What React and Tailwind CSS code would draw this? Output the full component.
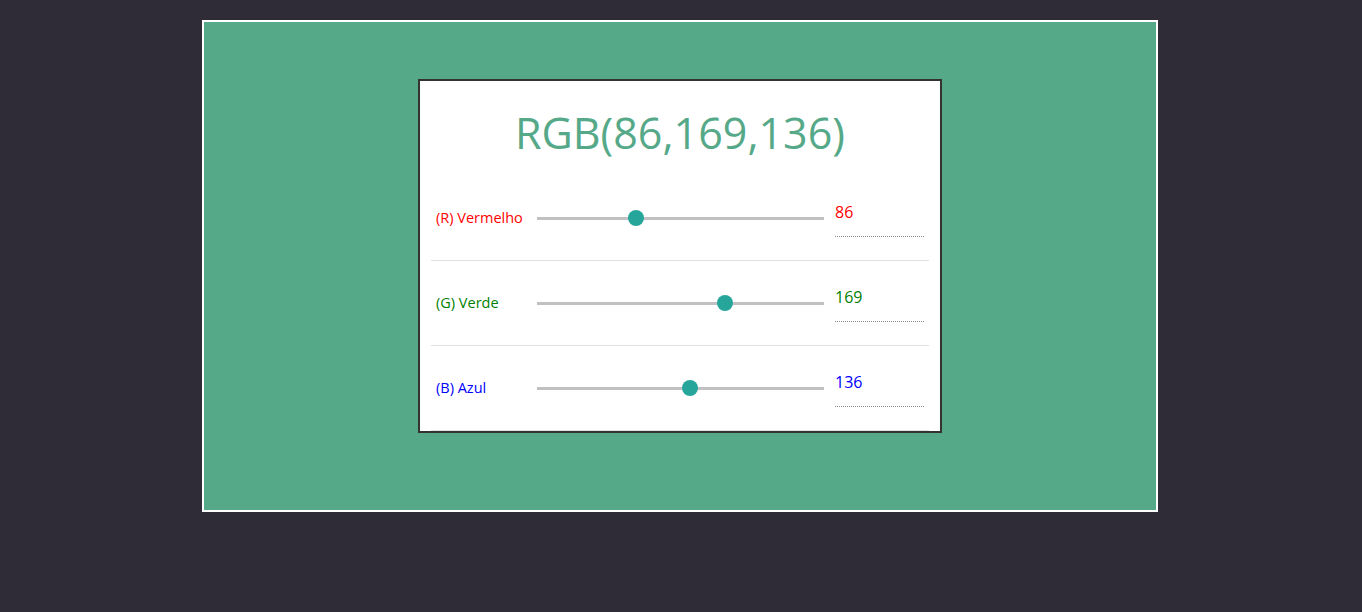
import { useState } from "react";

const CHANNELS = [
  { key: "r", label: "(R) Vermelho", color: "text-[#ff0000]" },
  { key: "g", label: "(G) Verde", color: "text-[#008000]" },
  { key: "b", label: "(B) Azul", color: "text-[#0000ff]" },
];

function Slider({ value }) {
  // thumb sits inside track minus its own width
  const pct = value / 255;
  return (
    <div className="relative h-4 flex-1 flex items-center">
      <div className="h-[3px] w-full bg-[#c2c0c2]" />
      <div
        className="absolute top-0 h-4 w-4 rounded-full bg-[#26a69a]"
        style={{ left: `calc((100% - 16px) * ${pct})` }}
      />
    </div>
  );
}

export default function App() {
  const [rgb] = useState({ r: 86, g: 169, b: 136 });
  const bg = `rgb(${rgb.r},${rgb.g},${rgb.b})`;

  return (
    <div className="min-h-screen bg-[#2f2c37] pt-5 font-['Open_Sans',sans-serif]">
      <div
        className="ml-[202px] flex h-[492px] w-[956px] justify-center border-2 border-white pt-[57px]"
        style={{ backgroundColor: bg }}
      >
        <div className="h-[354px] w-[524px] border-2 border-[#333333] bg-white px-[11px]">
          <h1
            className="flex h-[95px] items-center justify-center pt-2 text-[43px] leading-none"
            style={{ color: bg }}
          >
            RGB({rgb.r},{rgb.g},{rgb.b})
          </h1>
          {CHANNELS.map((c) => (
            <div
              key={c.key}
              className="flex h-[85px] items-center border-b border-[#e0e0e0] px-[5px]"
            >
              <span className={`w-[101px] text-[14.5px] ${c.color}`}>{c.label}</span>
              <Slider value={rgb[c.key]} />
              <div className="ml-[11px] w-[89px] pb-[11px]">
                <div
                  className={`flex h-12 items-center border-b border-dotted border-[#888888] text-base ${c.color}`}
                >
                  {rgb[c.key]}
                </div>
              </div>
            </div>
          ))}
        </div>
      </div>
    </div>
  );
}
